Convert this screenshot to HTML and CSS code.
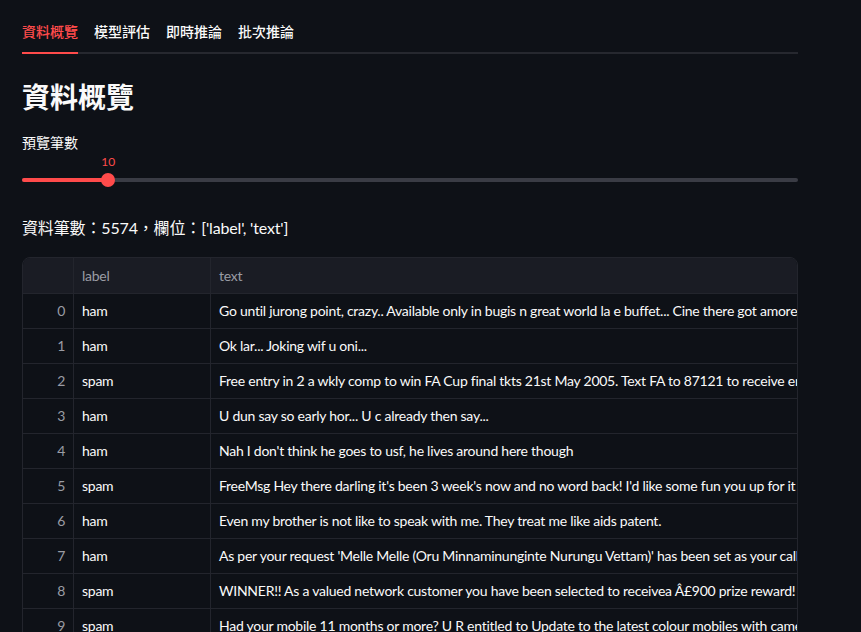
FILE: index.html
```html
<!DOCTYPE html>
<html lang="zh-Hant">
<head>
<meta charset="utf-8">
<title>資料概覽</title>
<link rel="stylesheet" href="styles.css">
</head>
<body>
<div class="main">
  <div class="tabs">
    <div class="tab active">資料概覽</div>
    <div class="tab">模型評估</div>
    <div class="tab">即時推論</div>
    <div class="tab">批次推論</div>
  </div>
  <div class="panel">
    <h1 class="title">資料概覽</h1>
    <div class="field-label">預覽筆數</div>
    <div class="slider">
      <div class="slider-value" style="width: 11.1%">10</div>
      <div class="track">
        <div class="fill" style="width: 11.1%"><span class="thumb"></span></div>
      </div>
    </div>
    <p class="summary">資料筆數：5574，欄位：['label', 'text']</p>
    <div class="table">
      <div class="row head">
        <div class="cell idx"></div>
        <div class="cell lbl">label</div>
        <div class="cell txt">text</div>
      </div>
      <div class="row"><div class="cell idx">0</div><div class="cell lbl">ham</div><div class="cell txt">Go until jurong point, crazy.. Available only in bugis n great world la e buffet... Cine there got amore wat...</div></div>
      <div class="row"><div class="cell idx">1</div><div class="cell lbl">ham</div><div class="cell txt">Ok lar... Joking wif u oni...</div></div>
      <div class="row"><div class="cell idx">2</div><div class="cell lbl">spam</div><div class="cell txt">Free entry in 2 a wkly comp to win FA Cup final tkts 21st May 2005. Text FA to 87121 to receive entry question(std txt rate)</div></div>
      <div class="row"><div class="cell idx">3</div><div class="cell lbl">ham</div><div class="cell txt">U dun say so early hor... U c already then say...</div></div>
      <div class="row"><div class="cell idx">4</div><div class="cell lbl">ham</div><div class="cell txt">Nah I don't think he goes to usf, he lives around here though</div></div>
      <div class="row"><div class="cell idx">5</div><div class="cell lbl">spam</div><div class="cell txt">FreeMsg Hey there darling it's been 3 week's now and no word back! I'd like some fun you up for it still? Tb ok!</div></div>
      <div class="row"><div class="cell idx">6</div><div class="cell lbl">ham</div><div class="cell txt">Even my brother is not like to speak with me. They treat me like aids patent.</div></div>
      <div class="row"><div class="cell idx">7</div><div class="cell lbl">ham</div><div class="cell txt">As per your request 'Melle Melle (Oru Minnaminunginte Nurungu Vettam)' has been set as your callertune for all Callers.</div></div>
      <div class="row"><div class="cell idx">8</div><div class="cell lbl">spam</div><div class="cell txt">WINNER!! As a valued network customer you have been selected to receivea Â£900 prize reward! To claim call 09061701461.</div></div>
      <div class="row"><div class="cell idx">9</div><div class="cell lbl">spam</div><div class="cell txt">Had your mobile 11 months or more? U R entitled to Update to the latest colour mobiles with camera for Free!</div></div>
    </div>
  </div>
</div>
</body>
</html>
```
FILE: styles.css
```css
* { box-sizing: border-box; }
html, body {
  margin: 0;
  padding: 0;
  background: #0e1117;
  color: #fafafa;
  font-family: "Lato", "Noto Sans CJK TC", sans-serif;
  overflow: hidden;
}
.main {
  width: 798px;
  padding: 12px 0 0 22px;
}
.tabs {
  display: flex;
  gap: 16px;
  height: 42px;
  border-bottom: 2px solid #26282f;
}
.tab {
  font-size: 14px;
  font-weight: 500;
  line-height: 40px;
  height: 42px;
  color: #fafafa;
  border-bottom: 2px solid transparent;
}
.tab.active {
  color: #ff4b4b;
  border-bottom-color: #ff4b4b;
}
.panel {
  padding-top: 26px;
}
.title {
  margin: 0;
  font-size: 28px;
  line-height: 34px;
  font-weight: 700;
}
.field-label {
  margin-top: 19px;
  font-size: 14px;
  line-height: 20px;
}
.slider-value {
  color: #ff4b4b;
  font-size: 12px;
  line-height: 18px;
  text-align: right;
  margin-left: 7px;
  height: 18px;
}
.track {
  margin-top: 7px;
  height: 4px;
  background: #3a3c45;
  border-radius: 2px;
  position: relative;
}
.fill {
  height: 4px;
  background: #ff4b4b;
  border-radius: 2px;
  position: relative;
}
.thumb {
  position: absolute;
  right: -7px;
  top: -5px;
  width: 14px;
  height: 14px;
  border-radius: 50%;
  background: #ff4b4b;
}
.summary {
  margin: 34px 0 0;
  font-size: 16px;
  line-height: 24px;
  letter-spacing: -0.15px;
}
.table {
  margin-top: 17px;
  border: 1px solid #23252d;
  border-radius: 8px 8px 0 0;
  overflow: hidden;
  width: 776px;
}
.row {
  display: flex;
  height: 35px;
  border-bottom: 1px solid #23252d;
}
.row.head {
  height: 36px;
  background: #1a1c24;
}
.cell {
  font-size: 14px;
  line-height: 34px;
  white-space: nowrap;
  overflow: hidden;
  padding: 0 8px;
  letter-spacing: -0.25px;
}
.head .cell {
  line-height: 36px;
  color: #9a9ca4;
}
.idx {
  width: 51px;
  flex: none;
  text-align: right;
  color: #9a9ca4;
  border-right: 1px solid #23252d;
}
.lbl {
  width: 137px;
  flex: none;
  border-right: 1px solid #23252d;
}
.txt {
  flex: 1;
  min-width: 0;
}
```
